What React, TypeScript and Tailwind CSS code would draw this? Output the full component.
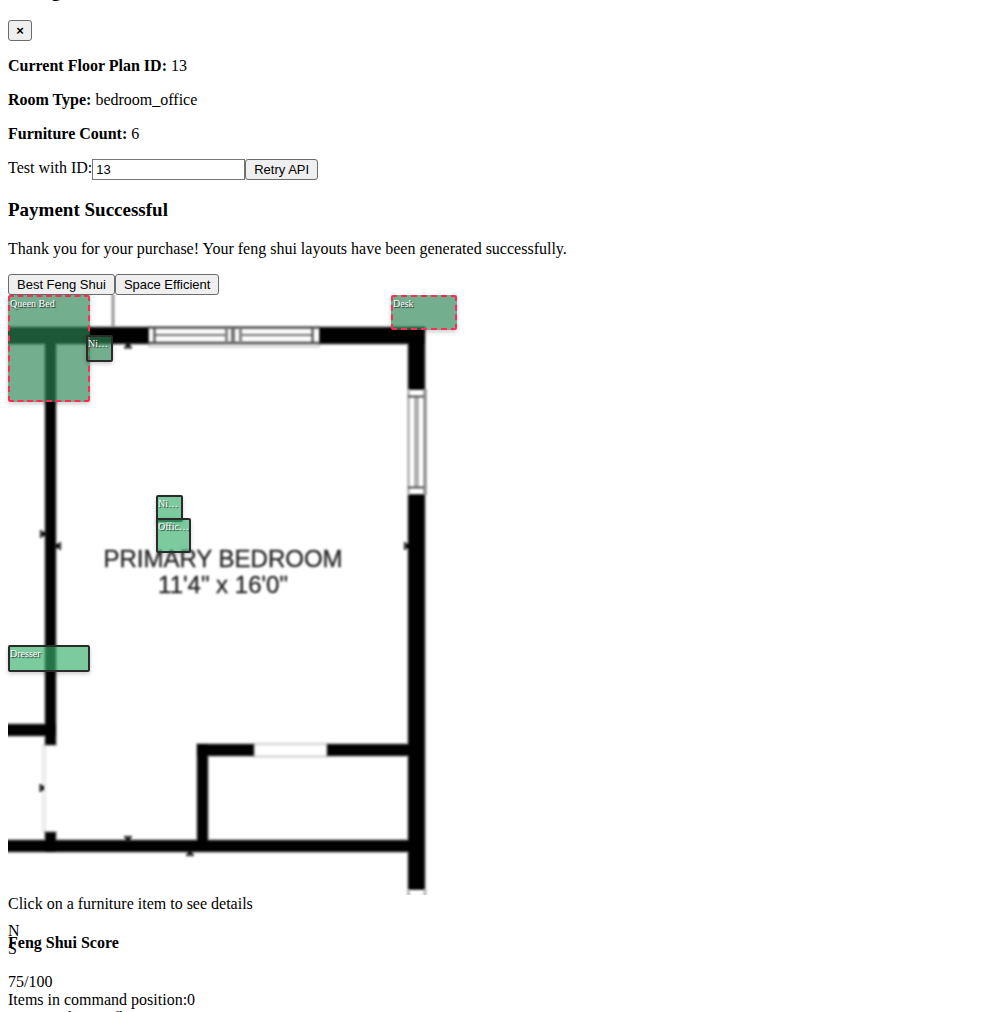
import { useState } from "react";

type Item = {
  id: string;
  label: string;
  box: string;
  tone: string;
  border: string;
};

const VALID = "bg-[#38b06e]/66";
const WARN = "bg-[#2a8453]/66";
const SOLID = "border-solid border-[#2b2b2b]";
const DASHED = "border-dashed border-[#ff2d55]";

const ITEMS: Item[] = [
  { id: "bed", label: "Queen Bed", box: "left-0 top-0 w-[82px] h-[107px]", tone: WARN, border: DASHED },
  { id: "night-1", label: "Nightstand", box: "left-[78px] top-[40px] w-[27px] h-[27px]", tone: WARN, border: SOLID },
  { id: "night-2", label: "Nightstand", box: "left-[148px] top-[200px] w-[27px] h-[27px]", tone: VALID, border: SOLID },
  { id: "dresser", label: "Dresser", box: "left-0 top-[350px] w-[82px] h-[27px]", tone: VALID, border: SOLID },
  { id: "desk", label: "Desk", box: "left-[383px] top-0 w-[66px] h-[35px]", tone: WARN, border: DASHED },
  { id: "chair", label: "Office Chair", box: "left-[148px] top-[223px] w-[35px] h-[35px]", tone: VALID, border: SOLID },
];

const BUTTON =
  "h-[21px] rounded-[3px] border border-[#6b6b6b] bg-[#efefef] font-['Liberation_Sans',Arial,sans-serif] text-[13px] leading-4 text-black";

// Wall segments as x, y, width, height.
const WALLS = [
  [-4, 33, 144, 15],
  [312, 33, 104, 15],
  [38, 40, 9, 409],
  [401, 33, 15, 61],
  [401, 200, 15, 394],
  [-4, 430, 51, 10],
  [38, 538, 9, 18],
  [-4, 546, 414, 10],
  [190, 450, 9, 105],
  [190, 450, 55, 10],
  [320, 450, 90, 10],
];

function FloorPlan() {
  return (
    <svg viewBox="0 0 450 600" className="block h-[600px] w-[450px]" role="img" aria-label="Floor plan">
      <defs>
        <filter id="soft" x="-5%" y="-5%" width="110%" height="110%" colorInterpolationFilters="sRGB">
          <feGaussianBlur stdDeviation="0.9" />
        </filter>
        <filter id="softText" x="-5%" y="-20%" width="110%" height="140%" colorInterpolationFilters="sRGB">
          <feGaussianBlur stdDeviation="0.9" />
        </filter>
      </defs>
      <g filter="url(#soft)">
        <path d="M105 -4V32" stroke="#999" strokeWidth="3" />
        <path d="M36 449V538" stroke="#eee" strokeWidth="5" />
        <path d="M245 449H320M245 461.5H320" stroke="#dedede" strokeWidth="3" />
        {WALLS.map(([x, y, w, h]) => (
          <rect key={`h${x}-${y}-${w}`} x={x - 2} y={y - 2} width={w + 4} height={h + 4} fill="#a8a8a8" />
        ))}
        {WALLS.map(([x, y, w, h]) => (
          <rect key={`c${x}-${y}-${w}`} x={x - 0.6} y={y - 0.6} width={w + 1.2} height={h + 1.2} fill="#000" />
        ))}
        {/* window in the top wall */}
        <rect x="141" y="32" width="170" height="17" fill="#fafafa" />
        <path d="M140 51.5H312" stroke="#e0e0e0" strokeWidth="3" />
        <path d="M140 32.5H312M140 48H312" stroke="#505050" strokeWidth="2.4" />
        <path d="M146 40H218M233 40H305" stroke="#777" strokeWidth="2.2" />
        <path d="M146.5 33V48M304.5 33V48" stroke="#505050" strokeWidth="2.2" />
        <path d="M218.5 33V48M232.5 33V48" stroke="#888" strokeWidth="3" />
        <path d="M225 33V48" stroke="#777" strokeWidth="4" />
        {/* window in the right wall */}
        <rect x="400" y="95" width="17" height="104" fill="#fff" />
        <path d="M400.5 94V200" stroke="#bbb" strokeWidth="3" />
        <path d="M417 94V200" stroke="#929292" strokeWidth="3.5" />
        <path d="M408.5 102V192" stroke="#b0b0b0" strokeWidth="5" />
        <path d="M400 101.5H416M400 192.5H416" stroke="#505050" strokeWidth="2.2" />
        {/* open end of the right wall */}
        <rect x="401.5" y="595" width="14" height="8" fill="#fff" />
        <path d="M400.5 594V603M417 594V603" stroke="#bbb" strokeWidth="3" />
        {/* dimension ticks */}
        <path
          d="M120 49V53M182 557V560M120 545V542M37 239H33M48 251H52M401 251H397M36 493H33"
          stroke="#000"
          strokeWidth="4.5"
        />
        <path
          d="M116 52.5H124M178 560H186M116 542H124M33 235V243M52 247V255M397 247V255M32.5 489V497"
          stroke="#444"
          strokeWidth="2.5"
        />
      </g>
      <g
        filter="url(#softText)"
        fill="#222"
        stroke="#222"
        strokeWidth="0.3"
        textAnchor="middle"
        className="font-['Liberation_Sans',Arial,sans-serif] text-[24px]"
      >
        <text x="215" y="272">PRIMARY BEDROOM</text>
        <text x="215" y="298">11'4" x 16'0"</text>
      </g>
    </svg>
  );
}

export default function App() {
  const [testId, setTestId] = useState("13");
  const [message, setMessage] = useState("Click on a furniture item to see details");

  return (
    <main className="h-screen overflow-hidden bg-white px-2 font-['Liberation_Serif','Times_New_Roman',serif] text-base leading-[18px] text-black">
      <div className="flex h-px items-end overflow-hidden">
        <h3 className="text-[19px] leading-[21px] font-bold">Debug Info</h3>
      </div>
      <button type="button" aria-label="Close" className={`${BUTTON} mt-[19px] block w-6 font-bold`}>
        ×
      </button>

      <div className="mt-4 flex flex-col gap-4">
        <p><strong>Current Floor Plan ID:</strong> 13</p>
        <p><strong>Room Type:</strong> bedroom_office</p>
        <p><strong>Furniture Count:</strong> 6</p>
      </div>

      <div className="mt-4 flex items-start">
        <label htmlFor="test-id">Test with ID:</label>
        <input
          id="test-id"
          value={testId}
          onChange={(e) => setTestId(e.target.value)}
          className="h-[21px] w-[153px] border border-[#767676] bg-white px-[3px] font-['Liberation_Sans',Arial,sans-serif] text-[13px]"
        />
        <button type="button" className={`${BUTTON} px-2`}>Retry API</button>
      </div>

      <h3 className="mt-[19px] text-[19px] leading-[21px] font-bold">Payment Successful</h3>
      <p className="mt-5">Thank you for your purchase! Your feng shui layouts have been generated successfully.</p>

      <div className="mt-4 flex">
        <button type="button" className={`${BUTTON} px-2`}>Best Feng Shui</button>
        <button type="button" className={`${BUTTON} px-2`}>Space Efficient</button>
      </div>

      <div className="relative">
        <FloorPlan />
        {ITEMS.map((item) => (
          <button
            key={item.id}
            type="button"
            onClick={() => setMessage(item.label)}
            className={`absolute flex items-start rounded-[2px] border-2 text-left text-[10px] leading-[14px] text-white shadow-[0_2px_4px_rgba(0,0,0,0.2)] [text-shadow:1px_1px_1px_rgba(0,0,0,0.8)] ${item.box} ${item.tone} ${item.border}`}
          >
            <span className="w-full truncate">{item.label}</span>
          </button>
        ))}
      </div>

      <p>{message}</p>

      <section className="relative pt-[21px]">
        <div className="absolute top-[9px] left-0">
          <div>N</div>
          <div>S</div>
        </div>
        <h4 className="font-bold">Feng Shui Score</h4>
        <div className="mt-[21px]">75/100</div>
        <div>Items in command position:0</div>
        <div>Items with poor flow:0</div>
      </section>
    </main>
  );
}
